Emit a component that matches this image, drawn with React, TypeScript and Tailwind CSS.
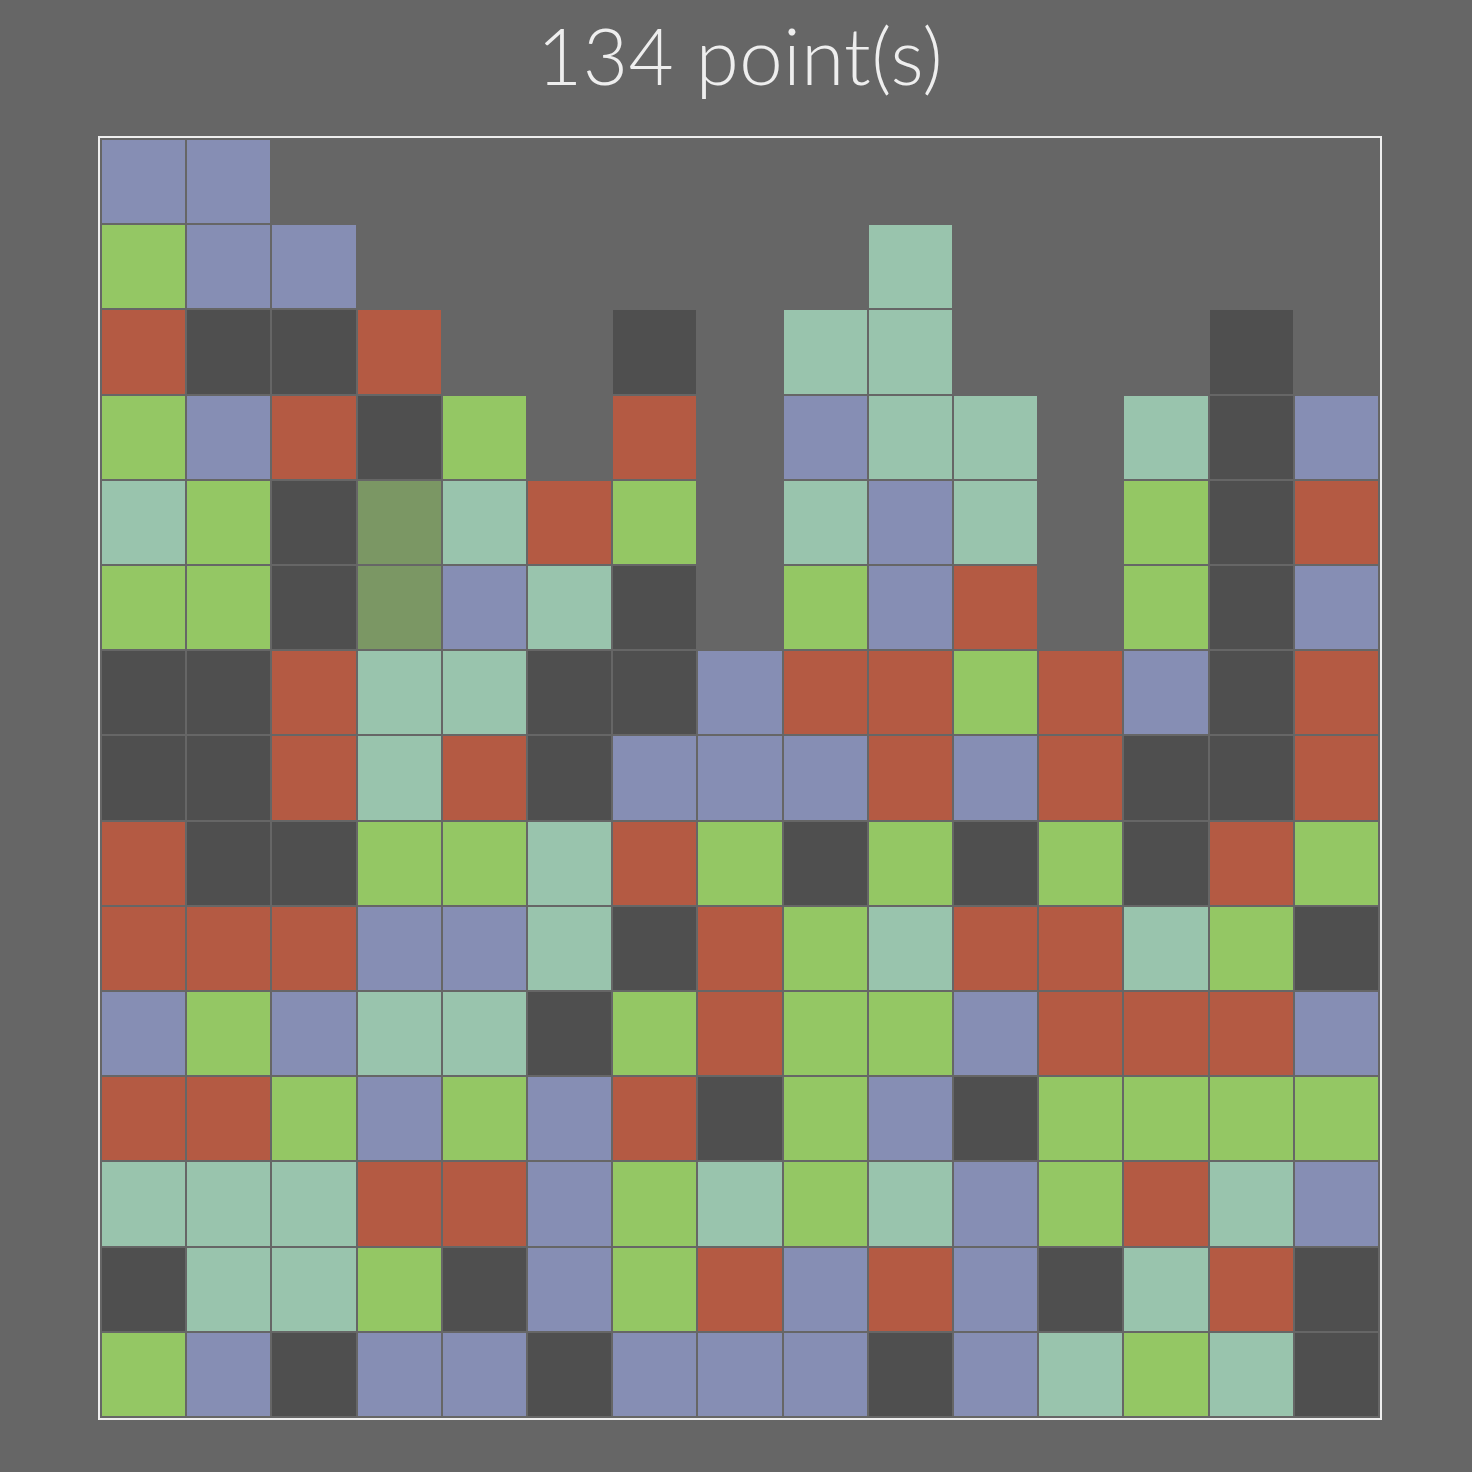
import React from "react";

const BOARD = [
  "PPEEEEEEEEEEEEE",
  "GPPEEEEEETEEEEE",
  "RDDREEDETTEEEDE",
  "GPRDGEREPTTETDP",
  "TGDOTRGETPTEGDR",
  "GGDOPTDEGPREGDP",
  "DDRTTDDPRRGRPDR",
  "DDRTRDPPPRPRDDR",
  "RDDGGTRGDGDGDRG",
  "RRRPPTDRGTRRTGD",
  "PGPTTDGRGGPRRRP",
  "RRGPGPRDGPDGGGG",
  "TTTRRPGTGTPGRTP",
  "DTTGDPGRPRPDTRD",
  "GPDPPDPPPDPTGTD",
];

const CELL_BG: Record<string, string> = {
  P: "bg-[#868eb4]",
  G: "bg-[#94c764]",
  T: "bg-[#99c4ad]",
  R: "bg-[#b45a43]",
  D: "bg-[#4f4f4f]",
  O: "bg-[#7b9764]",
  E: "bg-transparent",
};

const Cell = ({ code }: { code: string }) => {
  if (code === "E") return <div />;
  return <div className={`border border-[#666666] ${CELL_BG[code]}`} />;
};

const App = () => {
  const score = 134;

  return (
    <div className="min-h-screen w-[1472px] bg-[#666666] pl-2 flex flex-col items-center">
      <h1
        className="pt-4 text-[78px] leading-none font-light text-[#eeeeee] tracking-[0.5px]"
        style={{ fontFamily: "Lato, 'Open Sans', sans-serif" }}
      >
        {score} point(s)
      </h1>
      <div className="mt-[42px] w-[1284px] h-[1284px] border-2 border-[#eeeeee] p-px grid grid-cols-[repeat(15,minmax(0,1fr))] grid-rows-[repeat(15,minmax(0,1fr))]">
        {BOARD.map((row, r) =>
          row.split("").map((code, c) => <Cell key={`${r}-${c}`} code={code} />)
        )}
      </div>
    </div>
  );
};

export default App;
